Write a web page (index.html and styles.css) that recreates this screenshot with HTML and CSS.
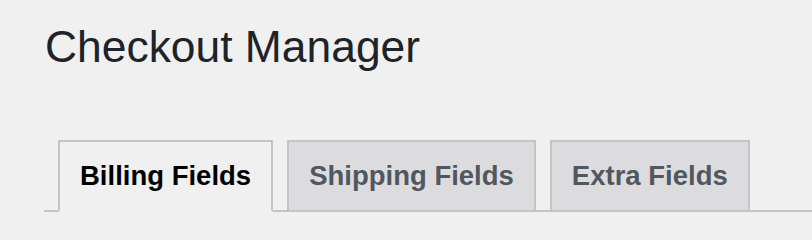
FILE: index.html
```html
<!DOCTYPE html>
<html>
<head>
<meta charset="utf-8">
<link rel="stylesheet" href="styles.css">
</head>
<body>
<div class="wrap">
  <h1 class="title">Checkout Manager</h1>
  <nav class="tabs">
    <a class="tab tab-active">Billing Fields</a>
    <a class="tab">Shipping Fields</a>
    <a class="tab">Extra Fields</a>
  </nav>
</div>
</body>
</html>
```
FILE: styles.css
```css
html, body {
  margin: 0;
  padding: 0;
  background: #f0f0f1;
}
body {
  font-family: "Liberation Sans", Arial, sans-serif;
  width: 812px;
  height: 240px;
  overflow: hidden;
}
.wrap {
  padding: 18px 0 0 44px;
}
.title {
  margin: 0;
  font-size: 44.4px;
  font-weight: 400;
  line-height: 57px;
  color: #1d2327;
  margin-left: 1px;
}
.tabs {
  margin-top: 65px;
  display: flex;
  border-bottom: 2px solid #c3c4c7;
}
.tab {
  margin-left: 14px;
  margin-bottom: -2px;
  padding: 10px 20px;
  font-size: 27.5px;
  font-weight: 700;
  line-height: 48px;
  color: #50575e;
  background: #dcdcde;
  border: 2px solid #c3c4c7;
  white-space: nowrap;
}
.tab-active {
  color: #000;
  background: #f0f0f1;
  border-bottom-color: #f0f0f1;
}
```
